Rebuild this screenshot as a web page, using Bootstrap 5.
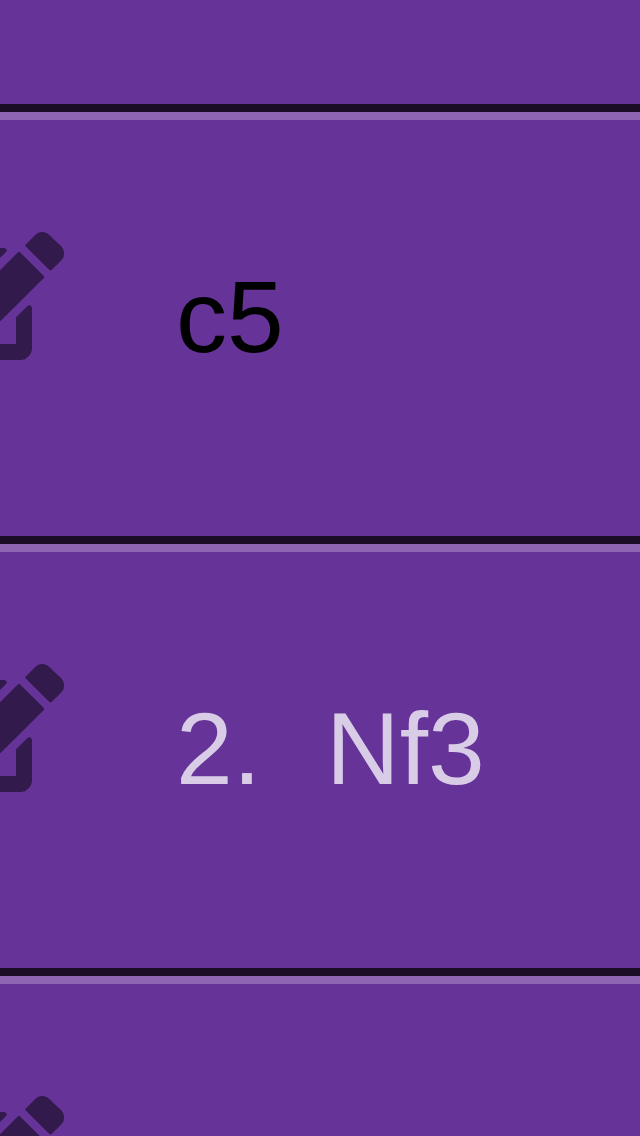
<!DOCTYPE html>
<html lang="en">
<head>
<meta charset="utf-8">
<meta name="viewport" content="width=device-width, initial-scale=1">
<title>Moves</title>
<link href="https://cdn.jsdelivr.net/npm/bootstrap@5.3.0/dist/css/bootstrap.min.css" rel="stylesheet">
<style>
body { background: #663399; font-family: "Liberation Sans", Arial, sans-serif; }
.move-row { min-height: 432px; border-top: 8px solid #1a0d26; box-shadow: inset 0 8px #8c66b3; }
.move-row.first-row { min-height: 104px; border: 0; box-shadow: none; }
.edit-btn { margin-top: 120px; color: #331a4c; }
.edit-btn svg { width: 64px; height: 128px; }
.move-text { margin: 152px 0 0 112px; font-size: 102px; line-height: 106px; color: #000; }
.move-text.white-move { color: #d9cce6; }
.move-number { width: 150px; }
</style>
</head>
<body>
<svg class="d-none" aria-hidden="true">
  <symbol id="edit" viewBox="0 0 64 128">
    <path fill="currentColor" d="M26 12.3 35 3.2C39-.9 45-.9 49 2.7L61 14.1C65 18.2 65 24.8 61.4 28.2L51.6 38.1Q50.5 39 49.4 38L26 14.8Q24.8 13.5 26 12.3Z"/>
    <path fill="currentColor" d="M17.8 20.4Q19 19.3 20.2 20.4L43.6 43.8Q44.6 45 43.6 46.2L0 89.6V38.2Z"/>
    <path fill="currentColor" d="M0 16H4Q6.7 16.2 6.8 18.5 6.6 19.4 6 20L0 26Z"/>
    <path fill="currentColor" d="M0 112H16V85.3L27 74.5Q28.4 73.2 30 73.3 31.8 73.8 32 76V116A12 12 0 0 1 20 128H0Z"/>
  </symbol>
</svg>
<main class="vh-100 overflow-hidden">
  <ul class="list-unstyled mb-0">
    <li class="move-row first-row"></li>
    <li class="move-row d-flex align-items-start">
      <button type="button" class="edit-btn btn p-0 border-0 rounded-0 d-flex flex-shrink-0" aria-label="Edit move"><svg aria-hidden="true"><use href="#edit"/></svg></button>
      <div class="move-text">c5</div>
    </li>
    <li class="move-row d-flex align-items-start">
      <button type="button" class="edit-btn btn p-0 border-0 rounded-0 d-flex flex-shrink-0" aria-label="Edit move"><svg aria-hidden="true"><use href="#edit"/></svg></button>
      <div class="move-text white-move d-flex"><span class="move-number flex-shrink-0">2.</span><span>Nf3</span></div>
    </li>
    <li class="move-row d-flex align-items-start">
      <button type="button" class="edit-btn btn p-0 border-0 rounded-0 d-flex flex-shrink-0" aria-label="Edit move"><svg aria-hidden="true"><use href="#edit"/></svg></button>
    </li>
  </ul>
</main>
<script src="https://cdn.jsdelivr.net/npm/bootstrap@5.3.0/dist/js/bootstrap.bundle.min.js"></script>
</body>
</html>
